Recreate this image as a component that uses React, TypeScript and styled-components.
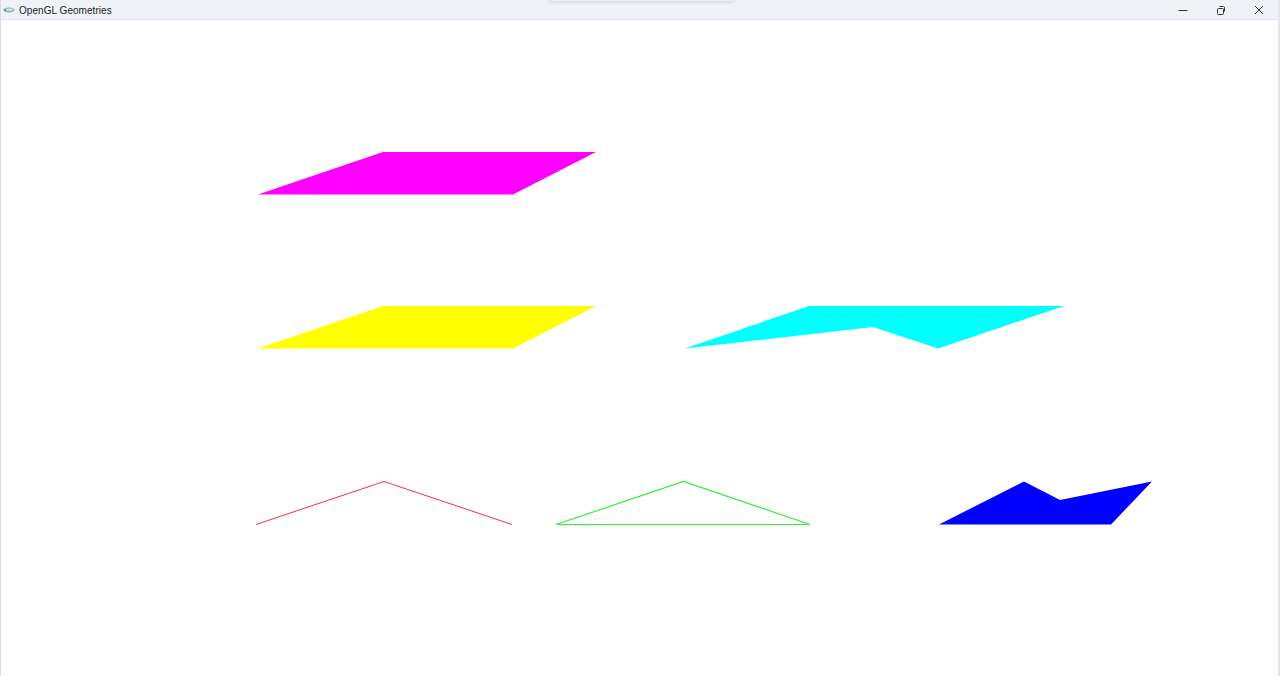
import React from "react";
import styled, { createGlobalStyle } from "styled-components";

const Global = createGlobalStyle`
  html, body { margin: 0; padding: 0; background: #ffffff; }
  body { font-family: "Liberation Sans", Arial, sans-serif; }
  #root { width: 1280px; height: 676px; }
`;

const Window = styled.div`
  width: 1280px;
  height: 676px;
  display: flex;
  flex-direction: column;
  box-sizing: border-box;
  border-left: 1px solid #d9dce1;
  border-right: 2px solid #e4e6ea;
  overflow: hidden;
`;

const TitleBar = styled.div`
  position: relative;
  height: 19px;
  flex: 0 0 19px;
  background: #eff3f9;
  border-bottom: 1px solid #e2e5ea;
  display: flex;
  align-items: center;
  padding-left: 1px;
  &::after {
    content: "";
    position: absolute;
    left: 548px;
    top: -4px;
    width: 186px;
    height: 5px;
    border-radius: 4px;
    box-shadow: 0 1px 4px rgba(0, 0, 0, 0.14);
    background: #eaedf2;
  }
`;

const AppIcon = styled.svg`
  width: 13px;
  height: 8px;
  margin-right: 4px;
  flex: none;
`;

const Title = styled.span`
  font-size: 10px;
  color: #1a1a1a;
  line-height: 19px;
  padding-top: 1px;
  letter-spacing: 0.05px;
  flex: 1;
`;

const Controls = styled.div`
  display: flex;
  height: 19px;
`;

const ControlButton = styled.div`
  width: 38px;
  height: 19px;
  display: flex;
  align-items: center;
  justify-content: center;
`;

const Canvas = styled.div`
  flex: 1;
  background: #ffffff;
`;

const Scene = styled.svg`
  display: block;
  width: 1277px;
  height: 656px;
`;

const oy = 20;
const ox = 1;
const pts = (arr: number[][]) => arr.map(([x, y]) => `${x - ox},${y - oy}`).join(" ");

export default function App() {
  return (
    <>
      <Global />
      <Window>
        <TitleBar>
          <AppIcon viewBox="0 0 13 8">
            <ellipse cx="7" cy="4" rx="5.5" ry="2.6" fill="#8fb1b8" />
            <ellipse cx="7.5" cy="3.6" rx="3.5" ry="1.2" fill="#d9e7ea" />
            <path d="M1 4 L4 2.8 L4 5.2 Z" fill="#5d8f9a" />
          </AppIcon>
          <Title>OpenGL Geometries</Title>
          <Controls>
            <ControlButton>
              <svg width="10" height="10" viewBox="0 0 10 10">
                <path d="M0.5 5.5 H9.5" stroke="#333" strokeWidth="1" />
              </svg>
            </ControlButton>
            <ControlButton>
              <svg width="10" height="10" viewBox="0 0 10 10">
                <rect x="1.5" y="3.5" width="6" height="6" rx="1" fill="none" stroke="#333" strokeWidth="1" />
                <path d="M3.5 1.5 H7.5 a1 1 0 0 1 1 1 V6.5" fill="none" stroke="#333" strokeWidth="1" />
              </svg>
            </ControlButton>
            <ControlButton>
              <svg width="10" height="10" viewBox="0 0 10 10">
                <path d="M1 1 L9 9 M9 1 L1 9" stroke="#333" strokeWidth="1" />
              </svg>
            </ControlButton>
          </Controls>
        </TitleBar>
        <Canvas>
          <Scene viewBox="0 0 1277 656">
            <polygon points={pts([[258, 194.5], [513, 194.5], [596, 152], [383, 152]])} fill="#ff00ff" />
            <polygon points={pts([[258, 348.5], [513, 348.5], [596, 306], [383, 306]])} fill="#ffff00" />
            <polygon
              points={pts([[685, 348.5], [873, 327], [938, 348.5], [1064, 306], [809, 306]])}
              fill="#00ffff"
            />
            <polyline
              points={pts([[256, 524.5], [384, 481.5], [512, 524.5]])}
              fill="none"
              stroke="#ff3030"
              strokeWidth="1"
            />
            <polygon
              points={pts([[556, 524.5], [683.5, 481.5], [810, 524.5]])}
              fill="none"
              stroke="#33ee33"
              strokeWidth="1.2"
            />
            <polygon
              points={pts([[939, 524.5], [1024, 481.5], [1060, 500], [1152, 481.5], [1111, 524.5]])}
              fill="#0000ff"
            />
          </Scene>
        </Canvas>
      </Window>
    </>
  );
}
